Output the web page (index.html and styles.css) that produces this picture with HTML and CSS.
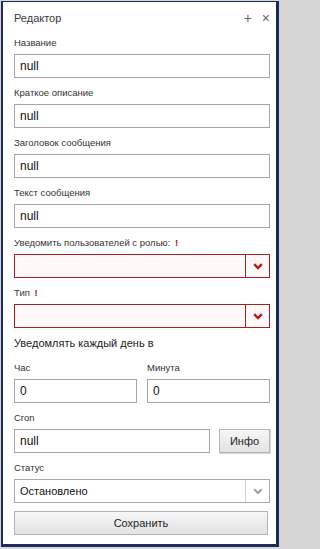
FILE: index.html
```html
<!DOCTYPE html>
<html lang="ru">
<head>
<meta charset="utf-8">
<title>Редактор</title>
<link rel="stylesheet" href="styles.css">
</head>
<body>
<div class="window">
  <div class="header">
    <span class="title">Редактор</span>
    <span class="tools"><span class="tool">+</span><span class="tool close">×</span></span>
  </div>
  <div class="form">
    <div class="field">
      <div class="label">Название</div>
      <div class="input">null</div>
    </div>
    <div class="field">
      <div class="label">Краткое описание</div>
      <div class="input">null</div>
    </div>
    <div class="field">
      <div class="label">Заголовок сообщения</div>
      <div class="input">null</div>
    </div>
    <div class="field">
      <div class="label">Текст сообщения</div>
      <div class="input">null</div>
    </div>
    <div class="field">
      <div class="label">Уведомить пользователей с ролью: <span class="req">!</span></div>
      <div class="select invalid">
        <div class="select-value"></div>
        <div class="select-arrow"><svg width="10" height="7" viewBox="0 0 10 7"><polyline points="1.2,1.2 5,5 8.8,1.2" fill="none" stroke="#b11c1c" stroke-width="2.4"/></svg></div>
      </div>
    </div>
    <div class="field">
      <div class="label">Тип <span class="req">!</span></div>
      <div class="select invalid">
        <div class="select-value"></div>
        <div class="select-arrow"><svg width="10" height="7" viewBox="0 0 10 7"><polyline points="1.2,1.2 5,5 8.8,1.2" fill="none" stroke="#b11c1c" stroke-width="2.4"/></svg></div>
      </div>
    </div>
    <div class="section">Уведомлять каждый день в</div>
    <div class="row">
      <div class="field col">
        <div class="label">Час</div>
        <div class="input">0</div>
      </div>
      <div class="field col">
        <div class="label">Минута</div>
        <div class="input">0</div>
      </div>
    </div>
    <div class="field">
      <div class="label">Cron</div>
      <div class="cron-row">
        <div class="input grow">null</div>
        <div class="btn info">Инфо</div>
      </div>
    </div>
    <div class="field">
      <div class="label">Статус</div>
      <div class="select">
        <div class="select-value">Остановлено</div>
        <div class="select-arrow"><svg width="10" height="7" viewBox="0 0 10 7"><polyline points="1.2,1.2 5,5 8.8,1.2" fill="none" stroke="#a0a0a0" stroke-width="2"/></svg></div>
      </div>
    </div>
    <div class="btn save">Сохранить</div>
  </div>
</div>
</body>
</html>
```
FILE: styles.css
```css
* { box-sizing: border-box; }
html { background: #d6d6d6; }
html, body { margin: 0; padding: 0; }
body {
  background: #d6d6d6;
  font-family: "Liberation Sans", Arial, sans-serif;
  color: #222;
  width: 280px;
  height: 549px;
  overflow: hidden;
}
.window {
  margin: 1px 0 0 1px;
  width: 278px;
  height: 546px;
  background: #fff;
  border-style: solid;
  border-color: #1c2a5c;
  border-width: 1px 3px 3px 2px;
  display: flex;
  flex-direction: column;
}
.header {
  height: 31px;
  display: flex;
  align-items: center;
  justify-content: space-between;
  padding: 0 6px 0 11px;
}
.title {
  font-size: 11px;
  color: #3a3a3a;
}
.tools {
  display: flex;
  gap: 10px;
  color: #666;
  font-size: 14px;
}
.tool { line-height: 14px; }
.form {
  padding: 3px 6px 0 11px;
  display: flex;
  flex-direction: column;
}
.field {
  display: flex;
  flex-direction: column;
  margin-bottom: 8px;
}
.label {
  font-size: 9.5px;
  line-height: 14px;
  height: 14px;
  color: #333;
  margin-bottom: 4px;
}
.req {
  color: #c01818;
  font-weight: bold;
  margin-left: 2px;
}
.input {
  height: 24px;
  border: 1px solid #a6a6a6;
  background: #fff;
  font-size: 12px;
  line-height: 22px;
  padding-left: 5px;
  color: #111;
}
.select {
  height: 24px;
  border: 1px solid #aaaaaa;
  display: flex;
  background: #fff;
}
.select-value {
  flex: 1;
  font-size: 11px;
  line-height: 22px;
  padding-left: 5px;
  color: #111;
}
.select-arrow {
  width: 24px;
  border-left: 1px solid #d0d0d0;
  display: flex;
  align-items: center;
  justify-content: center;
}
.select.invalid {
  border-color: #a82020;
  background: #fff8f8;
}
.select.invalid .select-arrow {
  border-left-color: #a82020;
}
.section {
  font-size: 11px;
  line-height: 14px;
  height: 14px;
  color: #222;
  margin-bottom: 11px;
}
.row {
  display: flex;
  gap: 10px;
}
.col { flex: 1; }
.cron-row {
  display: flex;
  gap: 9px;
}
.grow { flex: 1; }
.btn {
  height: 24px;
  border: 1px solid #b4b4b4;
  background: linear-gradient(#f7f7f7, #e2e2e2);
  font-size: 11px;
  line-height: 22px;
  text-align: center;
  color: #222;
}
.info {
  width: 51px;
  box-shadow: 1px 1px 1px rgba(0,0,0,0.15);
}
.save {
  width: 254px;
}
```
